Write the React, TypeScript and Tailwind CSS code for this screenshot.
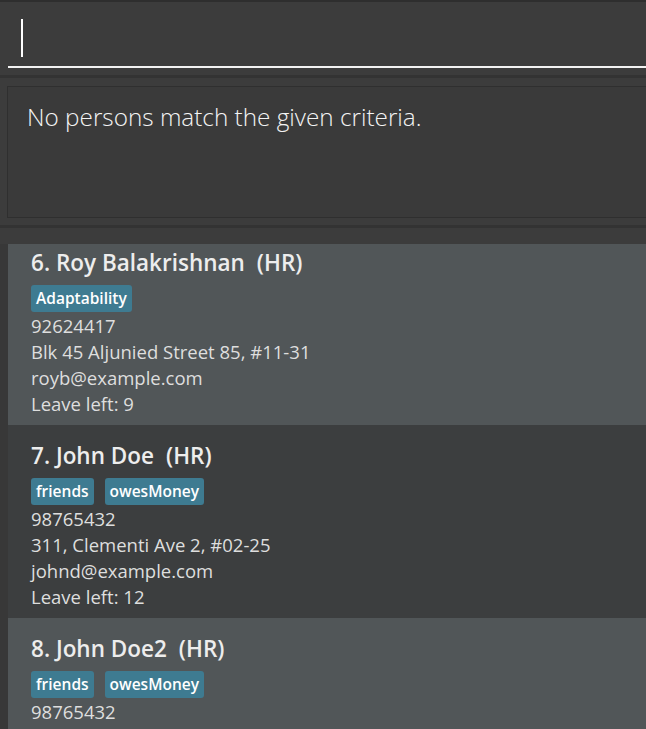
const persons = [
  {
    idx: 6,
    name: "Roy Balakrishnan",
    dept: "HR",
    tags: ["Adaptability"],
    phone: "92624417",
    address: "Blk 45 Aljunied Street 85, #11-31",
    email: "royb@example.com",
    leave: 9,
  },
  {
    idx: 7,
    name: "John Doe",
    dept: "HR",
    tags: ["friends", "owesMoney"],
    phone: "98765432",
    address: "311, Clementi Ave 2, #02-25",
    email: "johnd@example.com",
    leave: 12,
  },
  {
    idx: 8,
    name: "John Doe2",
    dept: "HR",
    tags: ["friends", "owesMoney"],
    phone: "98765432",
    address: "311, Clementi Ave 2, #02-25",
    email: "johnd@example.com",
    leave: 12,
  },
];

function PersonCard({ p, odd }: { p: (typeof persons)[number]; odd: boolean }) {
  return (
    <div
      className={
        "h-[193px] shrink-0 pl-[23px] pt-[18px] " +
        (odd ? "bg-[#515658]" : "bg-[#3c3e3f]")
      }
    >
      <div className="flex h-[26px] items-center gap-[12px] text-[22.5px] font-semibold leading-[26px] text-[#ededed]">
        <span>
          {p.idx}. {p.name}
        </span>
        <span>({p.dept})</span>
      </div>
      <div className="mt-[9px] flex gap-[11px]">
        {p.tags.map((t) => (
          <span
            key={t}
            className="flex h-[27px] items-center rounded-[3px] bg-[#3e7b91] px-[5px] text-[15.5px] font-semibold text-white"
          >
            {t}
          </span>
        ))}
      </div>
      <div className="mt-[1px] flex flex-col text-[18.5px] leading-[26px] text-[#dedede]">
        <span>{p.phone}</span>
        <span>{p.address}</span>
        <span>{p.email}</span>
        <span>Leave left: {p.leave}</span>
      </div>
    </div>
  );
}

export default function App() {
  return (
    <div className="flex h-[729px] w-[646px] flex-col overflow-hidden bg-[#3a3a3a] font-['Open_Sans',sans-serif]">
      <div className="h-[2px] bg-[#2e2e2e]" />
      <div className="flex h-[73px] flex-col bg-[#3c3c3c] pl-[8px]">
        <div className="ml-[13px] mt-[17px] h-[38px] w-[2px] bg-white" />
        <div className="mt-[9px] h-[2px] bg-[#f2f2f2]" />
      </div>
      <div className="h-[3px] bg-[#333333]" />
      <div className="flex flex-col bg-[#3c3c3c] pl-[7px] pt-[8px]">
        <div className="h-[132px] border border-r-0 border-[#2f2f2f] bg-[#3a3a3a] pl-[19px] pt-[12px] text-[24.3px] font-light text-[#f4f4f4]">
          No persons match the given criteria.
        </div>
        <div className="h-[7px]" />
      </div>
      <div className="h-[3px] bg-[#333333]" />
      <div className="h-[16px] bg-[#3c3c3c]" />
      <div className="flex min-h-0 flex-1 flex-col overflow-hidden bg-[#383838] pl-[8px]">
        <div className="-mt-[12px] flex flex-col">
          {persons.map((p, i) => (
            <PersonCard key={p.idx} p={p} odd={i % 2 === 0} />
          ))}
        </div>
      </div>
    </div>
  );
}
